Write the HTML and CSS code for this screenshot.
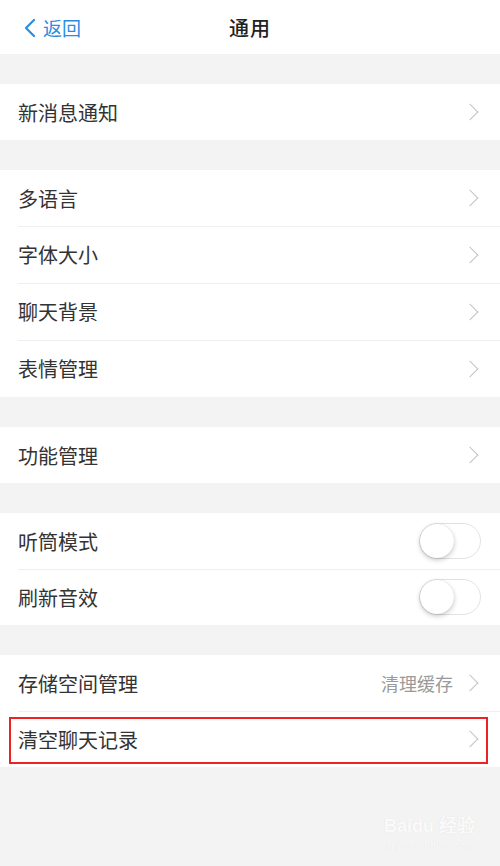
FILE: index.html
```html
<!DOCTYPE html>
<html lang="zh-CN">
<head>
    <meta charset="UTF-8">
    <meta name="viewport" content="width=device-width, initial-scale=1.0">
    <title>通用</title>
    <link rel="stylesheet" href="styles.css">
</head>
<body>

<div class="page">
    <header class="topbar">
        <a class="back" href="#">
            <svg class="back-icon" width="12" height="20" viewBox="0 0 12 20"><path d="M10 2 L2 10 L10 18" fill="none" stroke="#2b8de0" stroke-width="2.2" stroke-linecap="round" stroke-linejoin="round"/></svg>
            <span>返回</span>
        </a>
        <h1 class="title">通用</h1>
    </header>

    <div class="group">
        <div class="row"><span class="label">新消息通知</span><span class="arrow"></span></div>
    </div>

    <div class="group">
        <div class="row"><span class="label">多语言</span><span class="arrow"></span></div>
        <div class="row"><span class="label">字体大小</span><span class="arrow"></span></div>
        <div class="row"><span class="label">聊天背景</span><span class="arrow"></span></div>
        <div class="row"><span class="label">表情管理</span><span class="arrow"></span></div>
    </div>

    <div class="group">
        <div class="row"><span class="label">功能管理</span><span class="arrow"></span></div>
    </div>

    <div class="group">
        <div class="row"><span class="label">听筒模式</span><span class="switch"><span class="knob"></span></span></div>
        <div class="row"><span class="label">刷新音效</span><span class="switch"><span class="knob"></span></span></div>
    </div>

    <div class="group">
        <div class="row"><span class="label">存储空间管理</span><span class="extra">清理缓存</span><span class="arrow"></span></div>
        <div class="row marked"><span class="label">清空聊天记录</span><span class="arrow"></span></div>
    </div>

    <div class="watermark">
        <div class="wm-logo">Bai<span class="paw">du</span> 经验</div>
        <div class="wm-url">jingyan.baidu.com</div>
    </div>
</div>

</body>
</html>
```

FILE: styles.css
```css
body {
    margin: 0;
    padding: 0;
    background-color: #f3f3f3;
    font-family: "Noto Sans CJK SC", "Noto Sans", sans-serif;
    color: #333;
}
.page {
    position: relative;
    width: 500px;
    height: 866px;
    overflow: hidden;
}
.topbar {
    height: 54px;
    background-color: #fff;
    display: flex;
    align-items: center;
    justify-content: center;
    position: relative;
}
.back {
    position: absolute;
    left: 24px;
    top: 0;
    height: 54px;
    display: flex;
    align-items: center;
    gap: 7px;
    color: #2b8de0;
    text-decoration: none;
    font-size: 19px;
}
.back-icon {
    margin-top: 1px;
}
.title {
    margin: 0;
    font-size: 20px;
    font-weight: 500;
    color: #222;
    letter-spacing: 1px;
}
.group {
    margin-top: 30px;
    background-color: #fff;
}
.row {
    height: 56px;
    box-sizing: border-box;
    display: flex;
    align-items: center;
    padding: 0 20px 0 18px;
    position: relative;
}
.row + .row::before {
    content: "";
    position: absolute;
    left: 18px;
    right: 0;
    top: 0;
    border-top: 1px solid #efefef;
}
.group:nth-of-type(2) .row:nth-child(n+2) {
    height: 57px;
}
.label {
    flex: 1;
    font-size: 20px;
    color: #333;
}
.extra {
    font-size: 18px;
    color: #9a9a9a;
    margin-right: 11px;
}
.arrow {
    width: 11px;
    height: 11px;
    border-top: 1.6px solid #c4c4c8;
    border-right: 1.6px solid #c4c4c8;
    transform: rotate(45deg);
    margin-right: 4px;
}
.switch {
    width: 60px;
    height: 34px;
    border: 1.5px solid #e2e2e2;
    border-radius: 19px;
    position: relative;
    margin-right: -1px;
}
.knob {
    position: absolute;
    left: 0;
    top: 0;
    width: 34px;
    height: 34px;
    border-radius: 50%;
    background-color: #fff;
    box-shadow: 0 2px 5px rgba(0, 0, 0, 0.22), 0 0 1px rgba(0, 0, 0, 0.15);
}
.marked::after {
    content: "";
    position: absolute;
    left: 9px;
    right: 12px;
    top: 6px;
    bottom: 3px;
    border: 2px solid #ee2222;
}
.watermark {
    position: absolute;
    left: 384px;
    top: 814px;
    color: rgba(255, 255, 255, 0.9);
    font-family: "Liberation Sans", sans-serif;
    text-shadow: 0 0 1px rgba(0, 0, 0, 0.1);
}
.wm-logo {
    font-size: 18px;
    font-weight: bold;
    line-height: 24px;
    white-space: nowrap;
}
.wm-url {
    font-size: 11px;
    margin-left: 2px;
    margin-top: 2px;
}
```
